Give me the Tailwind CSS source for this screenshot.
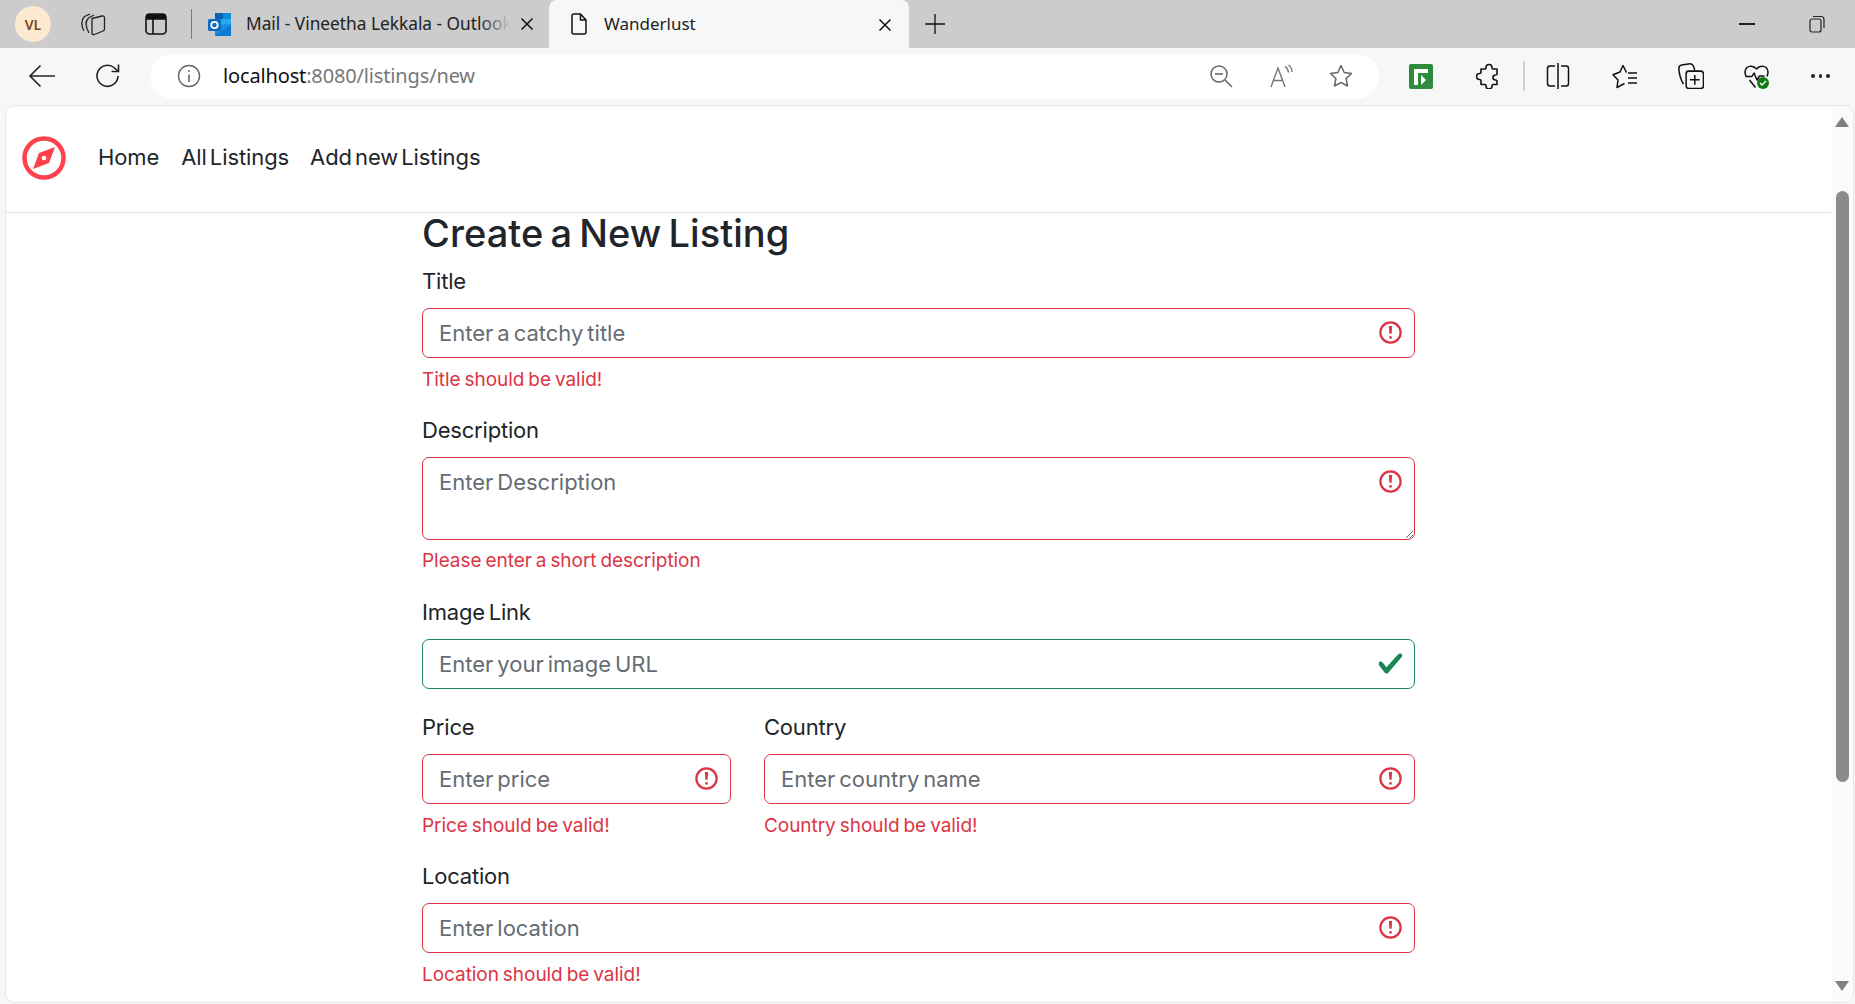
<!DOCTYPE html>
<html><head><meta charset="utf-8">
<script src="https://cdn.jsdelivr.net/npm/@tailwindcss/browser@4"></script>
<title>Wanderlust</title></head>
<body class="w-[1855px] h-[1004px] overflow-hidden bg-[#f7f7f7] font-['Inter',sans-serif]">
<!-- tab strip -->
<div class="h-[48px] bg-[#cccccc] flex items-center pl-[15px] font-['Noto_Sans',sans-serif] text-[17px] text-[#222]">
  <div class="w-[36px] h-[36px] rounded-full bg-[#fde8d0] flex items-center justify-center text-[14px] font-semibold text-[#7a4a1e]">VL</div>
  <div class="ml-[26px] w-[32px] flex justify-center"><svg class="w-[26px] h-[24px]" viewBox="0 0 26 24" fill="none" stroke="#222" stroke-width="1.300" stroke-linejoin="round"><path d="M12 6.500l10-2.500c1.500-.3 2.500.5 2.500 2v11c0 1-.5 1.700-1.500 2l-8.500 3.500c-1.500.5-2.500-.3-2.500-1.500z"/><path d="M4 19C1 14 1 8 4.500 4.500L10 2"/><path d="M9 21C5.500 15 5 9.500 8.500 6L14 3"/></svg></div>
  <div class="ml-[31px] w-[32px] flex justify-center"><svg class="w-[24px] h-[24px]" viewBox="0 0 24 24" fill="none" stroke="#111" stroke-width="1.600"><rect x="2" y="2" width="20" height="20" rx="3.500"/><path d="M3 2.800h18v4.200H3z" fill="#111"/><path d="M9 7V22"/></svg></div>
  <div class="ml-[19px] w-px h-[30px] bg-[#777]"></div>
  <div class="ml-[15px] w-[25px] h-[25px] flex-none"><svg class="w-full h-full" viewBox="0 0 25 25"><rect x="8" y="1" width="16" height="23" rx="1.500" fill="#28a8ea"/><rect x="8" y="1" width="8" height="6" fill="#0364b8"/><rect x="16" y="1" width="8" height="6" fill="#0a8fdc"/><path d="M8 13l16-1v11a1 1 0 0 1-1 1H9a1 1 0 0 1-1-1z" fill="#1490df"/><path d="M8 24l16-11v10a1 1 0 0 1-1 1z" fill="#0f78d4"/><rect x="1" y="7" width="13" height="12" rx="1.500" fill="#0f6cbd"/><circle cx="7.500" cy="13" r="3.200" fill="none" stroke="#fff" stroke-width="1.800"/></svg></div>
  <div class="ml-[14px] w-[264px] overflow-hidden whitespace-nowrap relative text-[17.3px]">Mail - Vineetha Lekkala - Outlook<div class="absolute right-0 top-0 bottom-0 w-[30px] bg-gradient-to-r from-transparent to-[#cccccc]"></div></div>
  <div class="ml-[7px] w-[20px] flex justify-center"><svg class="w-[14px] h-[14px]" viewBox="0 0 14 14" stroke="#111" stroke-width="1.500"><path d="M1.500 1.500l11 11M12.500 1.500l-11 11"/></svg></div>
  <div class="ml-[12px] w-[360px] h-[48px] self-start bg-[#f7f7f7] rounded-t-[8px] flex items-center pl-[20px] relative">
    <svg class="w-[20px] h-[24px]" viewBox="0 0 20 24" fill="none" stroke="#111" stroke-width="1.500" stroke-linejoin="round"><path d="M3 4a2 2 0 0 1 2-2h6.500L17 8v12a2 2 0 0 1-2 2H5a2 2 0 0 1-2-2zM11.500 2v6H17"/></svg>
    <span class="ml-[15px]">Wanderlust</span>
    <svg class="absolute left-[329px] top-[18px] w-[14px] h-[14px]" viewBox="0 0 14 14" stroke="#111" stroke-width="1.500"><path d="M1.500 1.500l11 11M12.500 1.500l-11 11"/></svg>
  </div>
  <div class="ml-[15px] w-[22px]"><svg class="w-[22px] h-[22px]" viewBox="0 0 22 22" stroke="#111" stroke-width="1.300"><path d="M11 1v20M1 11h20"/></svg></div>
  <div class="flex-1"></div>
  <div class="w-[16px] h-[1.500px] bg-[#222] mr-[54px]"></div>
  <svg class="w-[16px] h-[18px] mr-[30px]" viewBox="0 0 16 18" fill="none" stroke="#222" stroke-width="1.200"><rect x="1" y="4" width="11" height="13" rx="2"/><path d="M4 1.500h8a3 3 0 0 1 3 3V13"/></svg>
</div>
<!-- toolbar -->
<div class="h-[57px] bg-[#f7f7f7] flex items-center pl-[28px] pb-[1px]">
  <svg class="w-[28px] h-[28px]" viewBox="0 0 28 28" fill="none" stroke="#222" stroke-width="1.600"><path d="M27 14H2M12.500 3.500L2 14l10.500 10.500"/></svg>
  <svg class="ml-[38px] w-[28px] h-[28px]" viewBox="0 0 28 28" fill="none" stroke="#222" stroke-width="1.600"><path d="M24 14A10.500 10.500 0 1 1 20.500 6L24 9"/><path d="M24.500 2.500V9.500H17.500"/></svg>
  <div class="ml-[28px] w-[1229px] h-[45px] rounded-full bg-white flex items-center pl-[27px] relative">
    <svg class="w-[24px] h-[24px] flex-none" viewBox="0 0 24 24" fill="none" stroke="#666" stroke-width="1.400"><circle cx="12" cy="12" r="10.500"/><path d="M12 10.500V18" stroke-width="1.600"/><circle cx="12" cy="7" r=".9" fill="#666" stroke="none"/></svg>
    <span class="ml-[22px] text-[20px] font-['Noto_Sans',sans-serif] text-[#777] tracking-[-0.15px]"><span class="text-[#111]">localhost</span>:8080/listings/new</span>
    <div class="ml-auto flex items-center pr-[26px] gap-[36px]">
      <svg class="w-[24px] h-[24px]" viewBox="0 0 24 24" fill="none" stroke="#666" stroke-width="1.500"><circle cx="10" cy="10" r="8"/><path d="M6 10h8M16 16l7 7"/></svg>
      <svg class="w-[24px] h-[24px]" viewBox="0 0 24 24" fill="none" stroke="#777" stroke-width="1.400"><path d="M2 23L9 4l7 19M4.500 16.500h9M16 2.500c2 1 3 3 3.500 6M19.500 1c2 1.500 3.500 4 3.500 7"/></svg>
      <svg class="w-[24px] h-[24px]" viewBox="0 0 24 24" fill="none" stroke="#666" stroke-width="1.500" stroke-linejoin="round"><path d="M12 1.500l3.200 7 7.300.9-5.400 5.100 1.400 7.500L12 18.400 5.500 22l1.400-7.500L1.500 9.400l7.300-.9z"/></svg>
    </div>
  </div>
  <svg class="ml-[30px] w-[24px] h-[25px]" viewBox="0 0 24 25"><rect width="24" height="25" rx="2" fill="#2e8b3c"/><path d="M5 21V5h14v4H9v12z" fill="#fff"/><path d="M12 11l5 5-5 5z" fill="#fff"/></svg>
  <svg class="ml-[43px] w-[26px] h-[26px]" viewBox="0 0 26 26" fill="none" stroke="#111" stroke-width="1.600" stroke-linejoin="round"><path d="M10 4.500a3 3 0 0 1 6 0c0 .8 0 1.500 1 1.500h4v5c0 1-1 1-1.500 1a2.500 2.500 0 0 0 0 5c.5 0 1.500 0 1.500 1v3.500h-4c-1 0-1 .7-1 1.500a3 3 0 0 1-6 0c0-.8 0-1.500-1-1.500H5v-4c0-1-1-1-1.500-1a3 3 0 0 1 0-6C4 10.500 5 10.500 5 9.500V6h4c1 0 1-.7 1-1.500z"/></svg>
  <div class="ml-[21px] w-[2px] h-[30px] bg-[#cfcfcf]"></div>
  <svg class="ml-[21px] w-[24px] h-[28px]" viewBox="0 0 24 28" fill="none" stroke="#111" stroke-width="1.500"><path d="M12 1v26"/><path d="M9 4H4a2.500 2.500 0 0 0-2.500 2.500v15A2.500 2.500 0 0 0 4 24h5M15 4h5a2.500 2.500 0 0 1 2.500 2.500v15A2.500 2.500 0 0 1 20 24h-5"/></svg>
  <svg class="ml-[42px] w-[25px] h-[25px]" viewBox="0 0 25 25" fill="none" stroke="#111" stroke-width="1.500" stroke-linejoin="round"><path d="M14.500 8.500L11 1.500 8 8 1 10.800l5 5.200-1 7.500 7.500-4"/><path d="M16 9h9M16 14h9M16 19h9"/></svg>
  <svg class="ml-[41px] w-[26px] h-[26px]" viewBox="0 0 24 24" fill="none" stroke="#111" stroke-width="1.400" stroke-linejoin="round"><path d="M5 19.500C2.500 15 1 10 .8 5 .8 3 2 2 3.500 1.800L11 .8C13 .6 14.500 2 15.500 7"/><rect x="7.500" y="7.500" width="16" height="16" rx="2.500"/><path d="M15.500 11v9M11 15.500h9"/></svg>
  <div class="ml-[40px] w-[25px] h-[25px] relative">
    <svg class="w-[25px] h-[25px]" viewBox="0 0 25 25" fill="none" stroke="#111" stroke-width="1.500" stroke-linejoin="round"><path d="M12.500 5C9 .5 1.500 1.500 1 8c0 1.500.5 3 1 4.500M12.500 5C16 .5 23.500 1.500 24 8c0 1.500-.5 3-1 4.500"/><path d="M1.500 12.500h6.500l2-3.500 3 7 2.500-4h5M5.500 16l6 7.500"/></svg>
    <svg class="absolute left-[13px] top-[13px] w-[12px] h-[12px]" viewBox="0 0 12 12"><circle cx="6" cy="6" r="6" fill="#107c10"/><path d="M3 6l2 2 4-4" stroke="#fff" stroke-width="1.300" fill="none"/></svg>
  </div>
  <div class="ml-[42px] flex gap-[4px]"><i class="block w-[3.500px] h-[3.500px] rounded-full bg-[#222]"></i><i class="block w-[3.500px] h-[3.500px] rounded-full bg-[#222]"></i><i class="block w-[3.500px] h-[3.500px] rounded-full bg-[#222]"></i></div>
</div>
<!-- page -->
<div class="ml-[5px] mr-[1px] h-[898px] bg-white rounded-t-[10px] rounded-b-[10px] border border-[#e6e6e6] flex overflow-hidden text-[#212529]">
  <div class="flex-1 min-w-0">
    <nav class="h-[107px] border-b border-[#dee2e6] flex items-center pl-[16px] pb-[3px] text-[22px] tracking-[-0.1px] [word-spacing:-3px]">
      <svg class="w-[44px] h-[44px] flex-none" viewBox="0 0 44 44"><circle cx="22" cy="22" r="19.500" fill="none" stroke="#fe424d" stroke-width="4.500"/><path d="M33 11L27 27 11 33 17 17z" fill="#fe424d"/><circle cx="22" cy="22" r="2.300" fill="#fff"/></svg>
      <a class="ml-[32px]">Home</a><a class="ml-[22px]">All Listings</a><a class="ml-[21px]">Add new Listings</a>
    </nav>
    <main class="pl-[416px] w-[1409px]">
      <h1 class="text-[38px] leading-[40px] font-[450] tracking-[0.05px] [word-spacing:-3px]">Create a New Listing</h1>
      <form class="mt-[13px] text-[22px] [word-spacing:-2.2px]">
        <label class="block leading-[30px] tracking-[-0.2px]">Title</label>
        <div class="relative mt-[12px]">
          <input class="block w-full h-[50px] rounded-[7px] border-[1.500px] border-[#dc3545] px-[16px] [word-spacing:-2.2px] placeholder:text-[#666c73]" placeholder="Enter a catchy title">
          <svg class="absolute right-[11px] top-[11px] w-[27px] h-[27px]" viewBox="0 0 12 12" fill="none" stroke="#dc3545"><circle cx="6" cy="6" r="4.500" stroke-width="1"/><path d="M5.800 3.600h.4L6 6.500z"/><circle cx="6" cy="8.200" r=".6" fill="#dc3545" stroke="none"/></svg>
        </div>
        <p class="mt-[8px] text-[#dc3545] text-[19px] leading-[28px] tracking-[-0.05px] [word-spacing:-1.300px]">Title should be valid!</p>

        <label class="block mt-[21px] leading-[30px] tracking-[-0.2px]">Description</label>
        <div class="relative mt-[12px]">
          <textarea class="block w-full h-[83px] rounded-[7px] border-[1.500px] border-[#dc3545] px-[16px] py-[8px] [word-spacing:-2.2px] placeholder:text-[#666c73]" placeholder="Enter Description"></textarea>
          <svg class="absolute right-[11px] top-[11px] w-[27px] h-[27px]" viewBox="0 0 12 12" fill="none" stroke="#dc3545"><circle cx="6" cy="6" r="4.500" stroke-width="1"/><path d="M5.800 3.600h.4L6 6.500z"/><circle cx="6" cy="8.200" r=".6" fill="#dc3545" stroke="none"/></svg>
        </div>
        <p class="mt-[7px] text-[#dc3545] text-[19px] leading-[28px] tracking-[-0.05px] [word-spacing:-1.300px]">Please enter a short description</p>

        <label class="block mt-[22px] leading-[30px] tracking-[-0.2px]">Image Link</label>
        <div class="relative mt-[12px]">
          <input class="block w-full h-[50px] rounded-[7px] border-[1.500px] border-[#198754] px-[16px] [word-spacing:-2.2px] placeholder:text-[#666c73]" placeholder="Enter your image URL">
          <svg class="absolute right-[11px] top-[11px] w-[27px] h-[27px]" viewBox="0 0 8 8"><path fill="#198754" d="M2.300 6.730.6 4.530c-.4-1.040.46-1.400 1.100-.8l1.100 1.400 3.400-3.800c.6-.63 1.600-.27 1.200.7l-4 4.600c-.43.5-.8.4-1.100.1z"/></svg>
        </div>

        <div class="mt-[23px] flex gap-[33px]">
          <div class="w-[309px]">
            <label class="block leading-[30px] tracking-[-0.2px]">Price</label>
            <div class="relative mt-[12px]">
              <input class="block w-full h-[50px] rounded-[7px] border-[1.500px] border-[#dc3545] px-[16px] [word-spacing:-2.2px] placeholder:text-[#666c73]" placeholder="Enter price">
              <svg class="absolute right-[11px] top-[11px] w-[27px] h-[27px]" viewBox="0 0 12 12" fill="none" stroke="#dc3545"><circle cx="6" cy="6" r="4.500" stroke-width="1"/><path d="M5.800 3.600h.4L6 6.500z"/><circle cx="6" cy="8.200" r=".6" fill="#dc3545" stroke="none"/></svg>
            </div>
            <p class="mt-[8px] text-[#dc3545] text-[19px] leading-[28px] tracking-[-0.05px] [word-spacing:-1.300px]">Price should be valid!</p>
          </div>
          <div class="flex-1">
            <label class="block leading-[30px] tracking-[-0.2px]">Country</label>
            <div class="relative mt-[12px]">
              <input class="block w-full h-[50px] rounded-[7px] border-[1.500px] border-[#dc3545] px-[16px] [word-spacing:-2.2px] placeholder:text-[#666c73]" placeholder="Enter country name">
              <svg class="absolute right-[11px] top-[11px] w-[27px] h-[27px]" viewBox="0 0 12 12" fill="none" stroke="#dc3545"><circle cx="6" cy="6" r="4.500" stroke-width="1"/><path d="M5.800 3.600h.4L6 6.500z"/><circle cx="6" cy="8.200" r=".6" fill="#dc3545" stroke="none"/></svg>
            </div>
            <p class="mt-[8px] text-[#dc3545] text-[19px] leading-[28px] tracking-[-0.05px] [word-spacing:-1.300px]">Country should be valid!</p>
          </div>
        </div>

        <label class="block mt-[21px] leading-[30px] tracking-[-0.2px]">Location</label>
        <div class="relative mt-[12px]">
          <input class="block w-full h-[50px] rounded-[7px] border-[1.500px] border-[#dc3545] px-[16px] [word-spacing:-2.2px] placeholder:text-[#666c73]" placeholder="Enter location">
          <svg class="absolute right-[11px] top-[11px] w-[27px] h-[27px]" viewBox="0 0 12 12" fill="none" stroke="#dc3545"><circle cx="6" cy="6" r="4.500" stroke-width="1"/><path d="M5.800 3.600h.4L6 6.500z"/><circle cx="6" cy="8.200" r=".6" fill="#dc3545" stroke="none"/></svg>
        </div>
        <p class="mt-[8px] text-[#dc3545] text-[19px] leading-[28px] tracking-[-0.05px] [word-spacing:-1.300px]">Location should be valid!</p>
      </form>
    </main>
  </div>
  <!-- scrollbar -->
  <div class="w-[22px] flex-none bg-[#fbfbfb] flex flex-col items-center">
    <svg class="mt-[11px] w-[14px] h-[10px]" viewBox="0 0 14 10"><path d="M7 0l7 10H0z" fill="#808080"/></svg>
    <div class="mt-[64px] w-[13px] h-[591px] rounded-full bg-[#8b8b8b]"></div>
    <div class="flex-1"></div>
    <svg class="mb-[11px] w-[14px] h-[10px]" viewBox="0 0 14 10"><path d="M0 0h14L7 10z" fill="#808080"/></svg>
  </div>
</div>
</body></html>
